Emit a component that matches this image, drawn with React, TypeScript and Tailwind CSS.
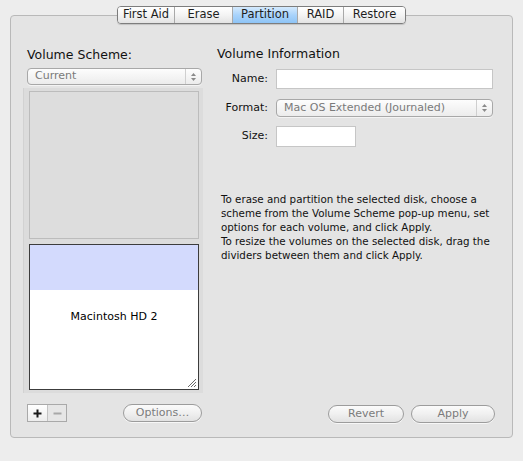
import React from "react";

const font = { fontFamily: '"Lucida Grande", "DejaVu Sans", sans-serif' };

function Tabs() {
  const tabs = [
    { label: "First Aid", w: "w-[56px]" },
    { label: "Erase", w: "w-[58px]" },
    { label: "Partition", w: "w-[65px]", active: true },
    { label: "RAID", w: "w-[46px]" },
    { label: "Restore", w: "w-[62px]" },
  ];
  return (
    <div className="relative z-10 flex justify-center">
      <div className="flex h-[18px] overflow-hidden rounded-[4px] border border-[#7d7d7d] shadow-[0_1px_1px_rgba(0,0,0,0.15)]">
        {tabs.map((t, i) => (
          <div
            key={t.label}
            className={`${t.w} flex items-center justify-center text-[11.5px] leading-none text-[#1e1e1e] ${
              i > 0 ? "border-l border-[#a9a9a9]" : ""
            } ${
              t.active
                ? "bg-gradient-to-b from-[#d5eafd] via-[#a9d3fb] to-[#8ec4f6]"
                : "bg-gradient-to-b from-[#ffffff] via-[#f4f4f4] to-[#e3e3e3]"
            }`}
          >
            {t.label}
          </div>
        ))}
      </div>
    </div>
  );
}

function Arrows() {
  return (
    <svg width="7" height="10" viewBox="0 0 7 10">
      <path d="M3.5 1 L6 4 L1 4 Z" fill="#8a8a8a" />
      <path d="M3.5 9 L6 6 L1 6 Z" fill="#8a8a8a" />
    </svg>
  );
}

function Popup({ label, className }: { label: string; className: string }) {
  return (
    <div
      className={`${className} flex items-stretch rounded-[4px] border border-[#a8a8a8] bg-gradient-to-b from-[#fdfdfd] to-[#ececec] shadow-[0_1px_0_rgba(255,255,255,0.6)]`}
    >
      <div className="flex flex-1 items-center pl-[7px] text-[11px] text-[#7a7a7a]">{label}</div>
      <div className="flex w-[16px] items-center justify-center border-l border-[#cfcfcf]">
        <Arrows />
      </div>
    </div>
  );
}

function PushButton({ label, className }: { label: string; className: string }) {
  return (
    <div
      className={`${className} flex h-[18px] items-center justify-center rounded-full border border-[#9c9c9c] bg-gradient-to-b from-[#fbfbfb] via-[#f0f0f0] to-[#e2e2e2] text-[11px] text-[#7b7b7b] shadow-[0_1px_0_rgba(255,255,255,0.7)]`}
    >
      {label}
    </div>
  );
}

function Grip() {
  return (
    <svg width="11" height="11" viewBox="0 0 11 11">
      <path d="M10 2 L2 10 M10 5 L5 10 M10 8 L8 10" stroke="#6a6a6a" strokeWidth="1" />
    </svg>
  );
}

export default function App() {
  return (
    <div className="h-[461px] w-[523px] overflow-hidden bg-[#ededed] pt-[6px]" style={font}>
      <Tabs />
      <div className="mx-[10px] -mt-[9px] flex h-[423px] rounded-[4px] border border-[#b9b9b9] bg-[#e4e4e4]">
        {/* left column */}
        <div className="ml-[12px] flex w-[180px] flex-col">
          <div className="mt-[31px] pl-[4px] text-[12.5px] leading-[16px] text-[#111]">Volume Scheme:</div>
          <Popup label="Current" className="ml-[4px] mt-[5px] h-[17px] w-[175px]" />
          <div className="mt-[3px] flex h-[305px] w-[180px] flex-col gap-[5px] border-l border-[#d2d2d2] bg-[#dcdcdc] pb-[3px] pl-[5px] pr-[4px] pt-[3px]">
            <div className="h-[148px] border border-[#bcbcbc] bg-[#dddddd]" />
            <div className="grid h-[146px] border border-[#3c3c3c]">
              <div className="flex flex-col [grid-area:1/1]">
                <div className="h-[45px] bg-[#d3dafd]" />
                <div className="flex flex-1 items-end justify-end bg-white pb-[1px] pr-[1px]">
                  <Grip />
                </div>
              </div>
              <div className="flex items-center justify-center text-[11px] text-black [grid-area:1/1]">
                Macintosh HD 2
              </div>
            </div>
          </div>
          <div className="mt-[11px] flex items-center pl-[4px]">
            <div className="flex h-[18px] border border-[#a9a9a9]">
              <div className="flex w-[19px] items-center justify-center bg-gradient-to-b from-[#ffffff] to-[#ededed]">
                <svg width="9" height="9" viewBox="0 0 9 9">
                  <path d="M4.5 0.5 V8.5 M0.5 4.5 H8.5" stroke="#1a1a1a" strokeWidth="2" />
                </svg>
              </div>
              <div className="flex w-[19px] items-center justify-center border-l border-[#c3c3c3] bg-[#e6e6e6]">
                <svg width="9" height="9" viewBox="0 0 9 9">
                  <path d="M0.5 4.5 H8.5" stroke="#a8a8a8" strokeWidth="2" />
                </svg>
              </div>
            </div>
            <PushButton label="Options…" className="ml-auto mr-[1px] w-[79px]" />
          </div>
        </div>

        {/* right column */}
        <div className="ml-[14px] flex flex-1 flex-col pr-[17px]">
          <div className="mt-[30px] text-[12.5px] leading-[16px] text-[#111]">Volume Information</div>
          <div className="mt-[7px] grid grid-cols-[51px_1fr] items-center gap-x-[8px] pr-[2px] text-[11px] text-[#111]">
            <div className="text-right">Name:</div>
            <div className="h-[20px] border border-[#c6c6c6] bg-white" />
            <div className="mt-[10px] text-right">Format:</div>
            <Popup label="Mac OS Extended (Journaled)" className="mt-[10px] h-[18px] w-full" />
            <div className="mt-[9px] text-right">Size:</div>
            <div className="mt-[9px] h-[21px] w-[80px] border border-[#c6c6c6] bg-white" />
          </div>
          <div className="-mr-[2px] mt-[45px] pl-[4px] text-[10.3px] leading-[14px] text-[#111]">
            <p>To erase and partition the selected disk, choose a scheme from the Volume Scheme pop-up menu, set options for each volume, and click Apply.</p>
            <p>To resize the volumes on the selected disk, drag the dividers between them and click Apply.</p>
          </div>
          <div className="mt-auto mb-[14px] flex justify-end gap-[7px]">
            <PushButton label="Revert" className="w-[76px]" />
            <PushButton label="Apply" className="w-[84px]" />
          </div>
        </div>
      </div>
    </div>
  );
}
